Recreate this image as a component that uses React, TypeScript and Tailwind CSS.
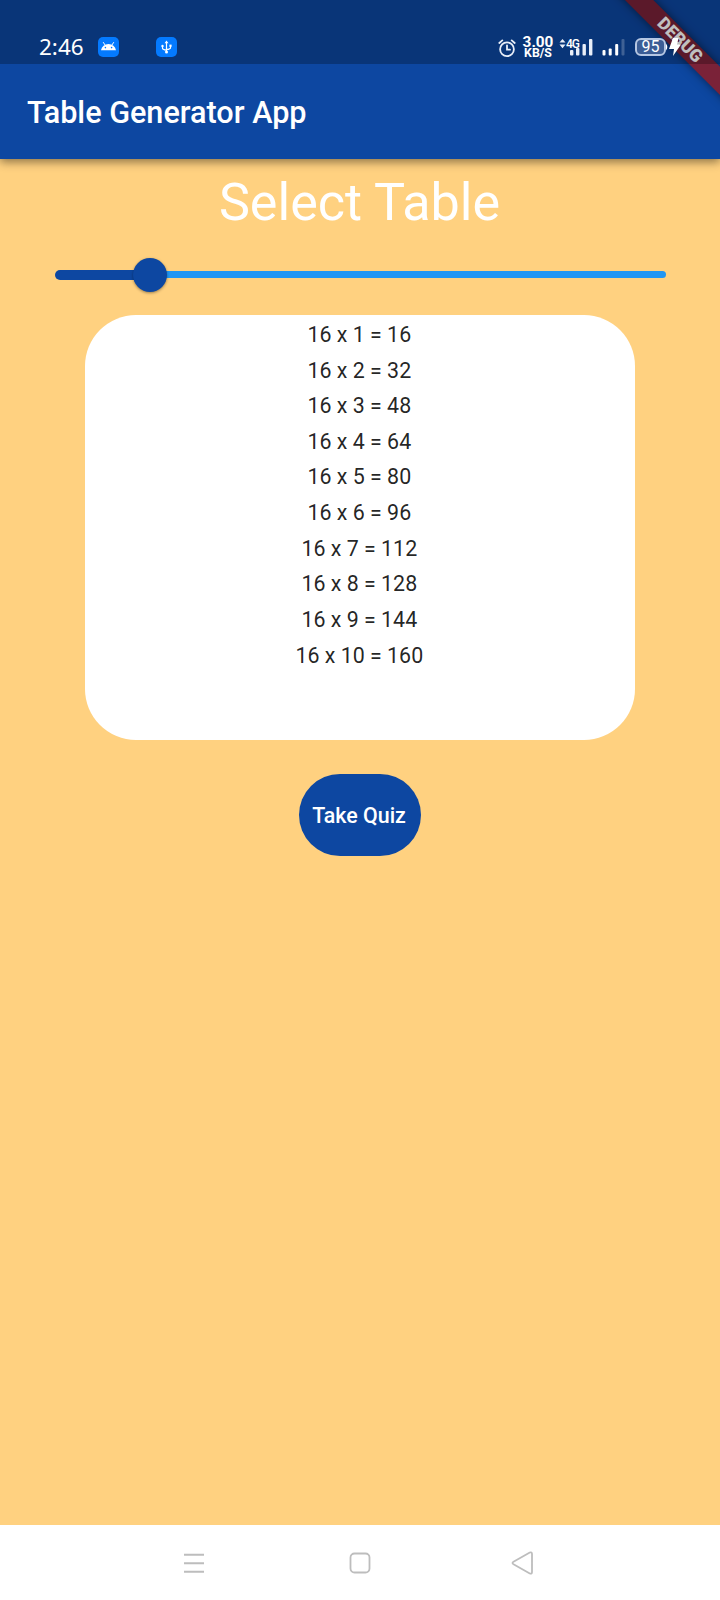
import React from "react";

const rows = Array.from({ length: 10 }, (_, i) => i + 1);
const selected = 16;

function StatusBar() {
  return (
    <div className="relative z-30 flex h-16 items-end bg-black/25 pl-[39px] text-white">
      <span className="h-[30px] w-[59px] font-['Noto_Sans'] text-[22.5px] leading-[26px]">2:46</span>
      <svg className="mb-[7px]" width="21" height="20" viewBox="0 0 21 20">
        <rect width="21" height="20" rx="5" fill="#047aff" />
        <path d="M3 13.2a7.6 7.4 0 0 1 15 0z" fill="#fff" />
        <path d="M5.2 5.2l2 3M15.8 5.2l-2 3" stroke="#fff" strokeWidth="1" />
        <circle cx="7.4" cy="10.6" r=".8" fill="#047aff" />
        <circle cx="13.6" cy="10.6" r=".8" fill="#047aff" />
      </svg>
      <svg className="mb-[7px] ml-[37px]" width="21" height="20" viewBox="0 0 21 20">
        <rect width="21" height="20" rx="5" fill="#047aff" />
        <path d="M10.5 5v10M6.5 9v2.3q0 1.4 4 1.9M14.5 8.5v2.3q0 1.4-4 1.9" fill="none" stroke="#fff" strokeWidth="1.2" />
        <path d="M8.5 6.2l2-2.6 2 2.6z" fill="#fff" />
        <circle cx="10.5" cy="15" r="1.5" fill="#fff" />
        <circle cx="6.5" cy="9" r="1.2" fill="#fff" />
        <path d="M13.4 7.6h2.2v2.2h-2.2z" fill="#fff" />
      </svg>
      <svg className="mb-[6px] ml-[321px]" width="18" height="20" viewBox="0 0 18 20" fill="none" stroke="#e8eef8" strokeWidth="1.8" strokeLinecap="round">
        <circle cx="9" cy="11.3" r="6.9" />
        <path d="M9 7.5v4.2h3M1.3 5l3-2.6M16.7 5l-3-2.6" />
      </svg>
      <div className="mb-[5px] ml-[6px] flex w-[32px] flex-col items-center font-[Roboto] font-bold">
        <span className="text-[15.3px] leading-[12px]">3.00</span>
        <span className="text-[12.3px] leading-[11px]">KB/S</span>
      </div>
      <div className="relative mb-[7px] ml-[5px] flex h-[20px] w-[36px]">
        <svg className="absolute" width="36" height="20" viewBox="0 0 36 20" fill="#e8eef8">
          <path d="M.5 5.6l3-3.6 3 3.6zM.5 7.6l3 3.6 3-3.6z" />
          <rect x="11" y="13" width="3.4" height="5.5" rx="1" />
          <rect x="17" y="11" width="3.4" height="7.5" rx="1" />
          <rect x="23.5" y="7" width="3.4" height="11.5" rx="1" />
          <rect x="30" y="2" width="3.4" height="16.5" rx="1" />
        </svg>
        <span className="ml-[7px] font-[Roboto] text-[12px] leading-[14px] font-medium tracking-[-1px]">4G</span>
      </div>
      <svg className="mb-[7px] ml-[7px]" width="24" height="20" viewBox="0 0 24 20" fill="#fff">
        <rect x=".5" y="13" width="3" height="5.5" rx="1" />
        <rect x="6.7" y="11.5" width="3" height="7" rx="1" />
        <rect x="13.2" y="7" width="3" height="11.5" rx="1" />
        <rect x="19.5" y="2" width="3" height="16.5" rx="1" opacity=".22" />
      </svg>
      <div className="mb-[8px] ml-[9px] flex h-[18px] w-[31px] items-center justify-center rounded-[6px] border-2 border-[#b5c6e2] bg-[#3b5d95] font-[Roboto] text-[16px] leading-none">
        95
      </div>
      <svg className="mb-[8px]" width="17" height="18" viewBox="0 0 17 18" fill="#fff">
        <path d="M0 5.5q2.6 3.5 0 7z" />
        <path d="M7 0h5.5L11 6.5h4L7 18l1-7H3z" />
      </svg>
    </div>
  );
}

function DebugBanner() {
  return (
    <div className="pointer-events-none absolute top-0 right-0 z-20 size-[110px] overflow-hidden">
      <div className="absolute top-[30.4px] left-[-31px] flex h-[20.4px] w-[200px] rotate-45 items-center justify-center bg-[#7a2238] pl-[1px] font-[Roboto] text-[17.5px] leading-none font-black text-white shadow-[0_0_10px_rgba(0,0,0,0.5)]">
        DEBUG
      </div>
    </div>
  );
}

export default function App() {
  return (
    <div className="relative flex h-[1600px] w-[720px] flex-col overflow-hidden bg-[#ffd180] font-[Roboto,sans-serif]">
      <DebugBanner />
      <div className="shrink-0 bg-[#0d47a1] shadow-[0_3px_9px_rgba(0,0,0,0.45)]">
        <StatusBar />
        <header className="flex h-[95px] items-center pt-[2px] pl-[27px] text-[30.6px] font-medium text-white">
          Table Generator App
        </header>
      </div>
      <main className="flex flex-1 flex-col items-center">
        <h1 className="mt-[13px] h-[62px] pr-[1px] text-[52.1px] leading-[62px] text-white">Select Table</h1>
        <div className="mt-[23px] flex h-[35px] w-[611px] items-center">
          <div className="h-[10px] w-[79.5px] rounded-l-full bg-[#0d47a1]" />
          <div className="z-10 -ml-px size-[34px] shrink-0 rounded-full bg-[#0d47a1] shadow-[0_1px_3px_rgba(0,0,0,0.4)]" />
          <div className="-ml-px h-[7px] flex-1 rounded-r-full bg-[#2196f3]" />
        </div>
        <section className="mt-[23.4px] flex h-[425px] w-[550px] flex-col items-center rounded-[51px] bg-white pt-[1.5px] text-[21.4px] text-black/87">
          {rows.map((n) => (
            <p key={n} className="h-[35.65px] -translate-x-[0.7px] leading-[36px]">
              {selected} x {n} = {selected * n}
            </p>
          ))}
        </section>
        <button className="mt-[33.6px] h-[82px] w-[122px] rounded-[41px] bg-[#0d47a1] pt-[2px] pr-[2px] text-[21.4px] font-medium text-white">
          Take Quiz
        </button>
      </main>
      <nav className="flex h-[75px] items-center bg-white pl-[183px] text-[#bdbdbd]">
        <svg width="22" height="22" viewBox="0 0 22 22" stroke="currentColor" strokeWidth="2">
          <path d="M1 2.7h20M1 11.2h20M1 19.7h20" />
        </svg>
        <svg className="ml-[144px]" width="22" height="22" viewBox="0 0 22 22" fill="none" stroke="currentColor" strokeWidth="1.8">
          <rect x="1.5" y="1.5" width="19" height="19" rx="4" />
        </svg>
        <svg className="ml-[140px]" width="24" height="24" viewBox="0 0 24 24" fill="none" stroke="currentColor" strokeWidth="1.8" strokeLinejoin="round">
          <path d="M2.5 10.7L18.8 1.5Q21 .7 21 3v18q0 2.3-2.2 1.5L2.5 13.3q-2-1.3 0-2.6z" />
        </svg>
      </nav>
    </div>
  );
}
